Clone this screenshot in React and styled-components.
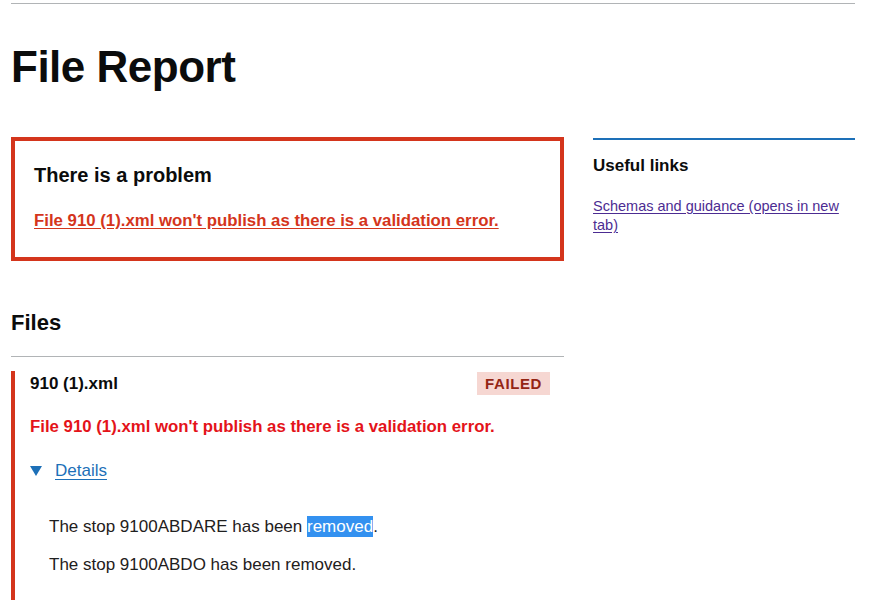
import styled, { createGlobalStyle } from 'styled-components';

const GlobalStyle = createGlobalStyle`
  html, body {
    margin: 0;
    padding: 0;
    background: #ffffff;
    color: #0b0c0c;
    font-family: 'Liberation Sans', Arial, sans-serif;
  }
`;

const Page = styled.div`
  width: 844px;
  margin-left: 11px;
  padding-top: 3px;
`;

const TopRule = styled.hr`
  margin: 0;
  border: 0;
  border-top: 1px solid #b1b4b6;
`;

const Grid = styled.div`
  display: grid;
  grid-template-columns: 553px 262px;
  column-gap: 29px;
`;

const Main = styled.main`
  display: flex;
  flex-direction: column;
`;

const Title = styled.h1`
  margin: 36px 0 0;
  font-size: 44px;
  line-height: 54px;
  font-weight: 700;
  letter-spacing: -0.5px;
`;

const ErrorSummary = styled.div`
  margin-top: 43px;
  height: 124px;
  box-sizing: border-box;
  border: 4px solid #d4351c;
  padding: 21px 19px 0;
`;

const SummaryTitle = styled.h2`
  margin: 0;
  font-size: 20px;
  line-height: 26px;
  font-weight: 700;
`;

const SummaryLink = styled.a`
  display: inline-block;
  margin-top: 23px;
  font-size: 16.8px;
  line-height: 20px;
  font-weight: 700;
  color: #d4351c;
  text-decoration: underline;
  text-underline-offset: 2px;
`;

const SectionHeading = styled.h2`
  margin: 48px 0 0;
  font-size: 22px;
  line-height: 28px;
  font-weight: 700;
  padding-bottom: 19px;
  border-bottom: 1px solid #b1b4b6;
`;

const FileCard = styled.section`
  margin-top: 14px;
  border-left: 4px solid #d4351c;
  padding: 1px 14px 26px 15px;
`;

const FileHeader = styled.div`
  display: flex;
  justify-content: space-between;
  align-items: flex-start;
`;

const FileName = styled.h3`
  margin: 2px 0 0;
  font-size: 17px;
  line-height: 20px;
  font-weight: 700;
`;

const Tag = styled.strong`
  display: inline-block;
  padding: 4px 8px 3px 8px;
  background: #f6d7d2;
  color: #942514;
  font-size: 15px;
  line-height: 16px;
  font-weight: 700;
  letter-spacing: 0.6px;
  text-transform: uppercase;
`;

const ErrorMessage = styled.p`
  margin: 21px 0 0;
  font-size: 16.8px;
  line-height: 22px;
  font-weight: 700;
  color: #e4131a;
`;

const Details = styled.details`
  margin-top: 22px;
`;

const Summary = styled.summary`
  display: flex;
  align-items: center;
  gap: 13px;
  list-style: none;
  cursor: pointer;
  color: #1d70b8;
  font-size: 17px;
  line-height: 22px;

  &::-webkit-details-marker {
    display: none;
  }
`;

const Arrow = styled.span`
  width: 0;
  height: 0;
  border-left: 6px solid transparent;
  border-right: 6px solid transparent;
  border-top: 10px solid #1d70b8;
`;

const SummaryText = styled.span`
  text-decoration: underline;
  text-underline-offset: 3px;
`;

const DetailsBody = styled.div`
  padding: 34px 0 0 19px;
`;

const Change = styled.p`
  margin: 0 0 16px;
  font-size: 17px;
  line-height: 22px;
  color: #1f2020;

  &:last-child {
    margin-bottom: 0;
  }
`;

const Selected = styled.span`
  background: #3391f0;
  color: #ffffff;
  padding: 1px 0;
`;

const Aside = styled.aside`
  margin-top: 134px;
  border-top: 2px solid #1d70b8;
`;

const AsideHeading = styled.h2`
  margin: 15px 0 0;
  font-size: 17px;
  line-height: 22px;
  font-weight: 700;
`;

const LinkList = styled.ul`
  margin: 20px 0 0;
  padding: 0;
  list-style: none;
`;

const AsideLink = styled.a`
  font-size: 14.5px;
  line-height: 19px;
  color: #4c2c92;
  text-decoration: underline;
  text-underline-offset: 2px;
`;

function App() {
  const message = "File 910 (1).xml won't publish as there is a validation error.";

  return (
    <>
      <GlobalStyle />
      <Page>
        <TopRule />
        <Grid>
          <Main>
            <Title>File Report</Title>

            <ErrorSummary role="alert">
              <SummaryTitle>There is a problem</SummaryTitle>
              <SummaryLink href="#file-1">{message}</SummaryLink>
            </ErrorSummary>

            <SectionHeading>Files</SectionHeading>

            <FileCard id="file-1">
              <FileHeader>
                <FileName>910 (1).xml</FileName>
                <Tag>Failed</Tag>
              </FileHeader>
              <ErrorMessage>{message}</ErrorMessage>
              <Details open>
                <Summary>
                  <Arrow />
                  <SummaryText>Details</SummaryText>
                </Summary>
                <DetailsBody>
                  <Change>
                    The stop 9100ABDARE has been <Selected>removed</Selected>.
                  </Change>
                  <Change>The stop 9100ABDO has been removed.</Change>
                </DetailsBody>
              </Details>
            </FileCard>
          </Main>

          <Aside>
            <AsideHeading>Useful links</AsideHeading>
            <LinkList>
              <li>
                <AsideLink href="#schemas">
                  Schemas and guidance (opens in new tab)
                </AsideLink>
              </li>
            </LinkList>
          </Aside>
        </Grid>
      </Page>
    </>
  );
}

export default App;
